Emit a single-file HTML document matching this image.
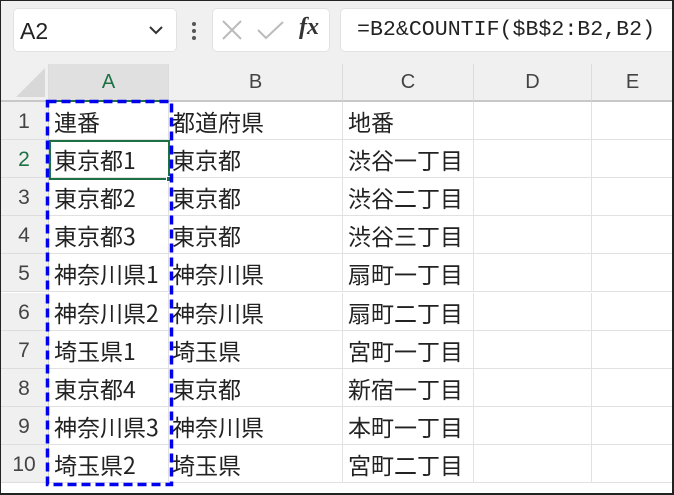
<!DOCTYPE html>
<html><head><meta charset="utf-8"><style>
*{box-sizing:border-box;margin:0;padding:0}
body{width:674px;height:495px;overflow:hidden;background:#fff;font-family:"Liberation Sans","Noto Sans CJK JP",sans-serif;position:relative}
.frame{position:absolute;left:0;top:0;width:674px;height:495px;border:1px solid #222;border-right-width:2px;border-bottom-width:2px;z-index:10;pointer-events:none}
.tb{position:absolute;left:0;top:0;width:674px;height:64px;background:#f0f0f0}
.box{position:absolute;background:#fff;border:1px solid #e2e2e2;border-radius:5px}
.hdr{position:absolute;top:64px;height:38px;background:#f0f0f0;border-right:1px solid #dcdcdc;border-bottom:2px solid #c8c8c8;text-align:center;line-height:36px;font-size:20px;color:#444}
.rn{position:absolute;left:0;width:49px;height:38px;background:#f0f0f0;border-bottom:1px solid #ddd;border-right:1px solid #d0d0d0;text-align:center;line-height:40px;font-size:21px;color:#444}
.c{position:absolute;height:38px;border-right:1px solid #e1e1e1;border-bottom:1px solid #e1e1e1;font-size:23px;line-height:38px;color:#222;padding-left:5px;white-space:nowrap;font-family:"Noto Sans CJK JP",sans-serif}
</style></head><body>
<div class="tb"></div>
<div class="box" style="left:13px;top:8px;width:164px;height:44px"></div>
<div style="position:absolute;left:20px;top:18px;font-size:23px;color:#222">A2</div>
<svg style="position:absolute;left:148px;top:25px" width="16" height="10"><path d="M2 2 L8 8 L14 2" stroke="#333" stroke-width="2" fill="none"/></svg>
<div style="position:absolute;left:192px;top:22px;width:4px;height:4px;background:#555;border-radius:2px"></div>
<div style="position:absolute;left:192px;top:29px;width:4px;height:4px;background:#555;border-radius:2px"></div>
<div style="position:absolute;left:192px;top:36px;width:4px;height:4px;background:#555;border-radius:2px"></div>
<div class="box" style="left:212px;top:8px;width:118px;height:44px"></div>
<svg style="position:absolute;left:220px;top:18px" width="110" height="26"><path d="M3 3 L21 21 M21 3 L3 21" stroke="#bbb" stroke-width="2"/><path d="M38 12 L46 20 L63 4" stroke="#bbb" stroke-width="2" fill="none"/></svg>
<div style="position:absolute;left:299px;top:14px;font-family:'Liberation Serif',serif;font-style:italic;font-weight:bold;font-size:24px;color:#333">fx</div>
<div class="box" style="left:340px;top:8px;width:340px;height:44px"></div>
<div style="position:absolute;left:357px;top:18px;font-family:'Liberation Mono',monospace;font-size:21.6px;color:#222">=B2&amp;COUNTIF($B$2:B2,B2)</div>

<div class="hdr" style="left:0;width:49px"><svg width="46" height="36" style="position:absolute;left:0;top:0"><path d="M16 33 L45 33 L45 4 Z" fill="#d8d8d8"/></svg></div>
<div class="hdr" style="left:49px;width:120px;background:#e0e0e0;color:#1e7145;border-bottom:2px solid #1e7145">A</div>
<div class="hdr" style="left:169px;width:174px">B</div>
<div class="hdr" style="left:343px;width:131px">C</div>
<div class="hdr" style="left:474px;width:118px">D</div>
<div class="hdr" style="left:592px;width:82px">E</div>

<div id="rows"></div>
<script>
var d=[["連番","都道府県","地番"],["東京都1","東京都","渋谷一丁目"],["東京都2","東京都","渋谷二丁目"],["東京都3","東京都","渋谷三丁目"],["神奈川県1","神奈川県","扇町一丁目"],["神奈川県2","神奈川県","扇町二丁目"],["埼玉県1","埼玉県","宮町一丁目"],["東京都4","東京都","新宿一丁目"],["神奈川県3","神奈川県","本町一丁目"],["埼玉県2","埼玉県","宮町二丁目"]];
var h="",cols=[[49,120],[169,174],[343,131],[474,118],[592,82]];
for(var i=0;i<10;i++){var t=102+i*38.1;
h+='<div class="rn" style="top:'+t+'px;'+(i==1?'color:#1e7145;':'')+'">'+(i+1)+'</div>';
for(var j=0;j<5;j++){h+='<div class="c" style="left:'+cols[j][0]+'px;top:'+t+'px;width:'+cols[j][1]+'px;'+(j==1?'padding-left:3px;':'')+'">'+(j<3?d[i][j]:'')+'</div>';}}
document.getElementById('rows').innerHTML=h;
</script>
<div style="position:absolute;left:49px;top:140px;width:121px;height:40px;border:2px solid #1e7145"></div>
<div style="position:absolute;left:166px;top:176px;width:6px;height:6px;background:#1e7145;border:1px solid #fff"></div>
<svg style="position:absolute;left:44px;top:98px" width="132" height="392"><rect x="3.5" y="3.5" width="124" height="383" fill="none" stroke="#0000ee" stroke-width="3.5" stroke-dasharray="9 5"/></svg>
<div class="frame"></div>
</body></html>
